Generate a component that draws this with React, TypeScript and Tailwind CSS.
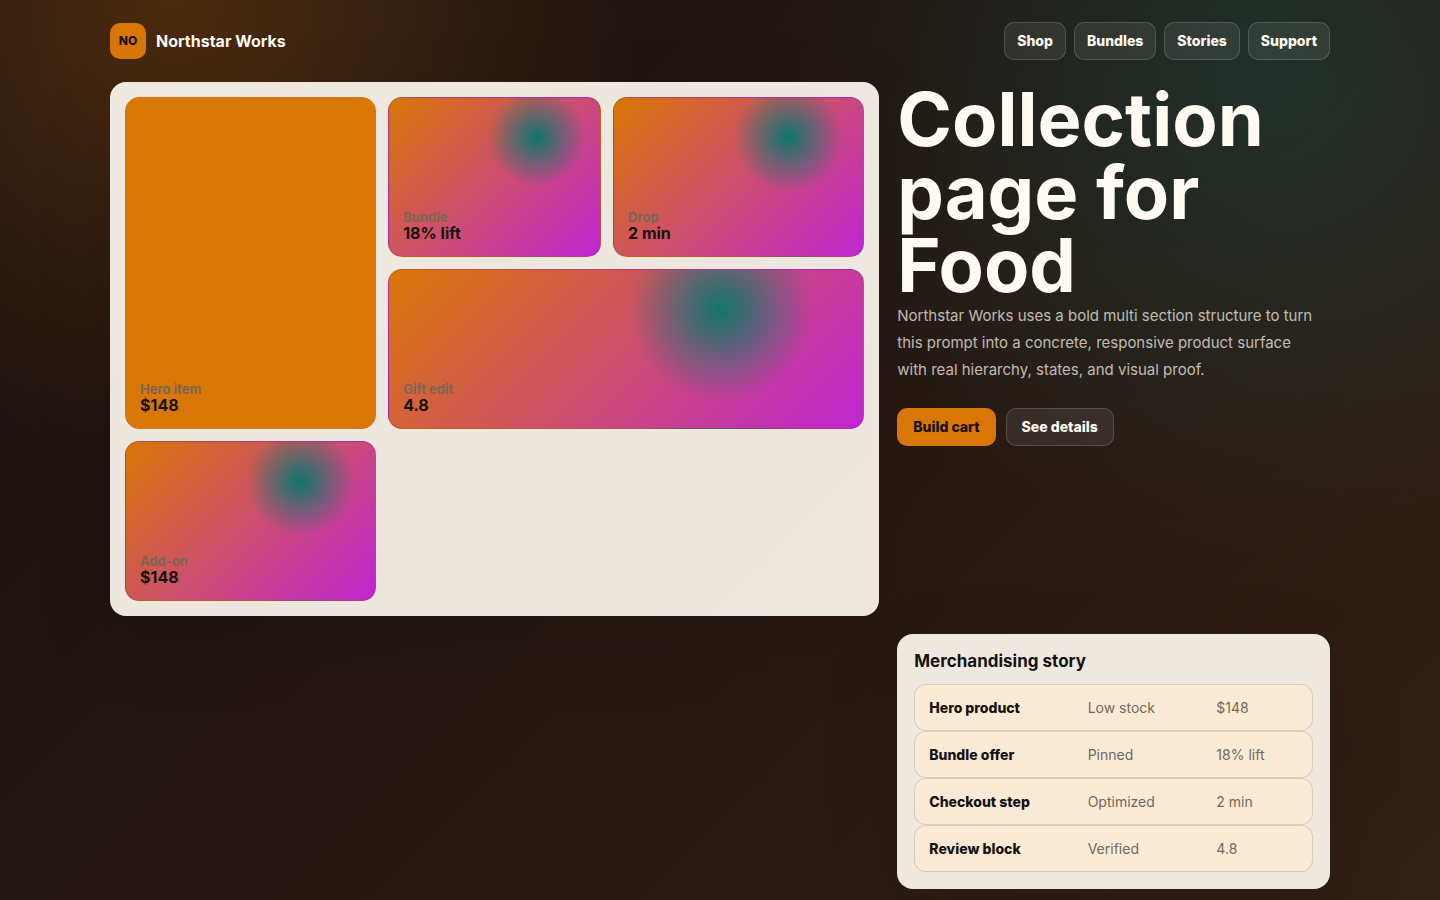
import React from 'react';

const navLinks = ['Shop', 'Bundles', 'Stories', 'Support'];

const tiles = [
  { label: 'Hero item', value: '$148', featured: true, className: 'row-span-2' },
  { label: 'Bundle', value: '18% lift', featured: false, className: '' },
  { label: 'Drop', value: '2 min', featured: false, className: '' },
  { label: 'Gift edit', value: '4.8', featured: false, className: 'col-span-2' },
  { label: 'Add-on', value: '$148', featured: false, className: '' },
];

const storyRows = [
  { name: 'Hero product', state: 'Low stock', value: '$148' },
  { name: 'Bundle offer', state: 'Pinned', value: '18% lift' },
  { name: 'Checkout step', state: 'Optimized', value: '2 min' },
  { name: 'Review block', state: 'Verified', value: '4.8' },
];

const Header = () => (
  <header className="flex items-center justify-between gap-4 py-[22px]">
    <a href="#" className="flex items-center gap-2.5 font-bold">
      <span className="grid size-9 place-items-center rounded-[10px] bg-[#d97706] text-xs font-extrabold text-[#17120f]">NO</span>
      <span>Northstar Works</span>
    </a>
    <nav className="flex gap-2">
      {navLinks.map((link) => (
        <a
          key={link}
          href="#"
          className="flex h-[38px] items-center rounded-[10px] border border-white/16 bg-white/8 px-3 text-sm font-extrabold"
        >
          {link}
        </a>
      ))}
    </nav>
  </header>
);

const Tile = ({ label, value, featured, className }: { label: string; value: string; featured: boolean; className: string }) => (
  <article
    className={`flex flex-col justify-end rounded-[14px] border p-3.5 ${className} ${
      featured
        ? 'border-[#d97706] bg-[#d97706]'
        : 'border-[#17120f]/14 bg-[radial-gradient(circle_at_70%_25%,#0f766e_0%,transparent_26%),linear-gradient(135deg,#d97706,#c026d3)]'
    }`}
  >
    <span className="text-[13px] leading-[14px] font-bold text-[#7c6555]">{label}</span>
    <strong className="text-base leading-[18px] font-bold">{value}</strong>
  </article>
);

const Gallery = () => (
  <section className="grid auto-rows-[160px] grid-cols-[1.18fr_1fr_1.18fr] gap-3 rounded-2xl bg-[#fffaf2]/92 p-[15px] text-[#17120f] shadow-[0_24px_80px_rgba(0,0,0,0.12)]">
    {tiles.map((tile) => (
      <Tile key={tile.label} {...tile} />
    ))}
  </section>
);

const Intro = () => (
  <section className="pt-px">
    <h1 className="text-[74px] leading-[73px] font-bold">Collection page for Food</h1>
    <p className="max-w-[425px] text-[15px] leading-[27px] text-[#fffaf2]/72">
      Northstar Works uses a bold multi section structure to turn this prompt into a concrete, responsive product surface
      with real hierarchy, states, and visual proof.
    </p>
    <div className="mt-[25px] flex gap-2.5">
      <button type="button" className="h-[38px] rounded-[10px] bg-[#d97706] px-4 text-sm font-extrabold text-[#17120f]">
        Build cart
      </button>
      <button type="button" className="h-[38px] rounded-[10px] border border-white/16 bg-white/8 px-[15px] text-sm font-extrabold">
        See details
      </button>
    </div>
  </section>
);

const Story = () => (
  <section className="col-start-2 rounded-2xl bg-[#fffaf2]/92 p-[17px] text-[#17120f] shadow-[0_24px_80px_rgba(0,0,0,0.12)]">
    <h2 className="mb-3 text-[17px] leading-[21px] font-bold">Merchandising story</h2>
    <table className="block w-full text-left text-sm">
      <tbody className="block">
        {storyRows.map((row) => (
          <tr
            key={row.name}
            className="grid h-[47px] grid-cols-[1fr_0.8fr_0.55fr] items-center gap-2.5 rounded-xl border border-[#17120f]/14 bg-[#fbebd6] px-3.5"
          >
            <th scope="row" className="font-extrabold">{row.name}</th>
            <td className="text-[#74675b]">{row.state}</td>
            <td className="text-[#74675b]">{row.value}</td>
          </tr>
        ))}
      </tbody>
    </table>
  </section>
);

const App: React.FC = () => (
  <div className="min-h-screen overflow-x-hidden bg-[radial-gradient(circle_at_12%_0%,rgba(217,119,6,0.26),transparent_30%),radial-gradient(circle_at_88%_8%,rgba(15,118,110,0.25),transparent_32%),linear-gradient(135deg,#180f0f,#321f15)] px-6 pb-[11px] font-[Inter,'Liberation_Sans',sans-serif] text-[#fffaf2]">
    <div className="mx-auto max-w-[1220px]">
      <Header />
      <main className="grid grid-cols-[1.6fr_0.9fr] gap-[18px]">
        <Gallery />
        <Intro />
        <Story />
      </main>
    </div>
  </div>
);

export default App;
